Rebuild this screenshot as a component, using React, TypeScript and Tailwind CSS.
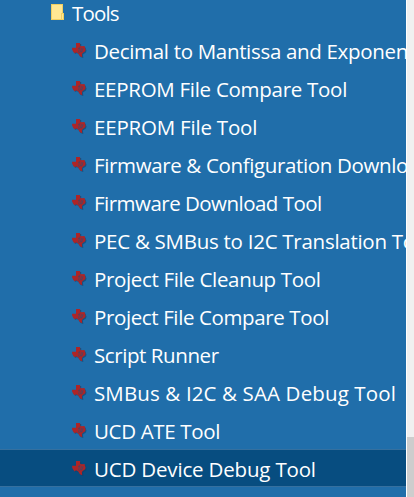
interface Tool {
  label: string;
  tracking: string;
  selected?: boolean;
}

const tools: Tool[] = [
  { label: "Decimal to Mantissa and Exponent", tracking: "tracking-[-0.32px]" },
  { label: "EEPROM File Compare Tool", tracking: "tracking-[-0.28px]" },
  { label: "EEPROM File Tool", tracking: "tracking-[-0.2px]" },
  { label: "Firmware & Configuration Download Tool", tracking: "tracking-[-0.36px]" },
  { label: "Firmware Download Tool", tracking: "tracking-[-0.52px]" },
  { label: "PEC & SMBus to I2C Translation Tool", tracking: "tracking-[-0.27px]" },
  { label: "Project File Cleanup Tool", tracking: "tracking-[-0.34px]" },
  { label: "Project File Compare Tool", tracking: "tracking-[-0.38px]" },
  { label: "Script Runner", tracking: "tracking-[-0.42px]" },
  { label: "SMBus & I2C & SAA Debug Tool", tracking: "tracking-[0.13px]" },
  { label: "UCD ATE Tool", tracking: "tracking-[-0.34px]" },
  { label: "UCD Device Debug Tool", tracking: "tracking-[-0.18px]", selected: true },
];

function FolderIcon() {
  return (
    <svg className="h-4 w-[13px] shrink-0" viewBox="0 0 13 16">
      <path d="M0 0h12v9h1v7H0z" fill="#f0cf62" />
      <path d="M1 1h10v8H10v6H1z" fill="#ffe793" />
      <path d="M11 10h1v5h-1z" fill="#ffe793" />
    </svg>
  );
}

function TexasIcon() {
  return (
    <svg className="h-4 w-[15px] shrink-0" viewBox="0 0 15 16">
      <path
        d="M5 2h4.2v3l4.3.5 1 3.2-.6 1.8-3 2.1.4 3.3-2.6-.8-2.2-3.2-1.6-.9-1.2 1L1 9V7h4z"
        fill="#123f68"
        opacity="0.6"
      />
      <path
        d="M4 1h4.1v2.8l1.6.5 2.9-.2.3 1.7.7 1.5-.4 2-2.2 1.5-1.1 1.2.3 3.2-2.3-.9-1.6-2.8-1.6-1.1-1.2.1-.9.9-1.5-1.9L.1 7.4V5.8H4z"
        fill="#ad2527"
      />
      <path
        d="M8 4.8 7.7 6.4H6M7.4 6.6l-.7 3c-.2.9.4 1.2 1.2.8M9.5 6.2l-.9 3.6H10l1-3.6"
        fill="none"
        stroke="#374a70"
        strokeWidth="0.7"
      />
    </svg>
  );
}

export default function App() {
  return (
    <div className="flex h-[497px] w-[414px] overflow-hidden bg-[#206eaa] font-['Open_Sans','Noto_Sans',sans-serif] text-[20.5px] text-white">
      <div className="-mt-[7px] w-[406px] shrink-0 overflow-hidden whitespace-nowrap">
        <div className="flex h-[38px] items-center pl-[51px]">
          <FolderIcon />
          <span className="ml-2 pt-0.5 leading-9 tracking-[-0.85px]">Tools</span>
        </div>
        {tools.map((tool) => (
          <div
            key={tool.label}
            className={`flex h-[38px] items-center border-y pl-[72px] ${
              tool.selected ? "border-[#35709f] bg-[#074d80]" : "border-transparent"
            }`}
          >
            <TexasIcon />
            <span className={`ml-[7px] pt-0.5 leading-[34px] ${tool.tracking}`}>{tool.label}</span>
          </div>
        ))}
      </div>
      <div className="flex w-2 shrink-0 flex-col border-l border-white bg-[#f0f0f0]">
        <div className="mt-[437px] flex-1 bg-[#cdcdcd]" />
      </div>
    </div>
  );
}
